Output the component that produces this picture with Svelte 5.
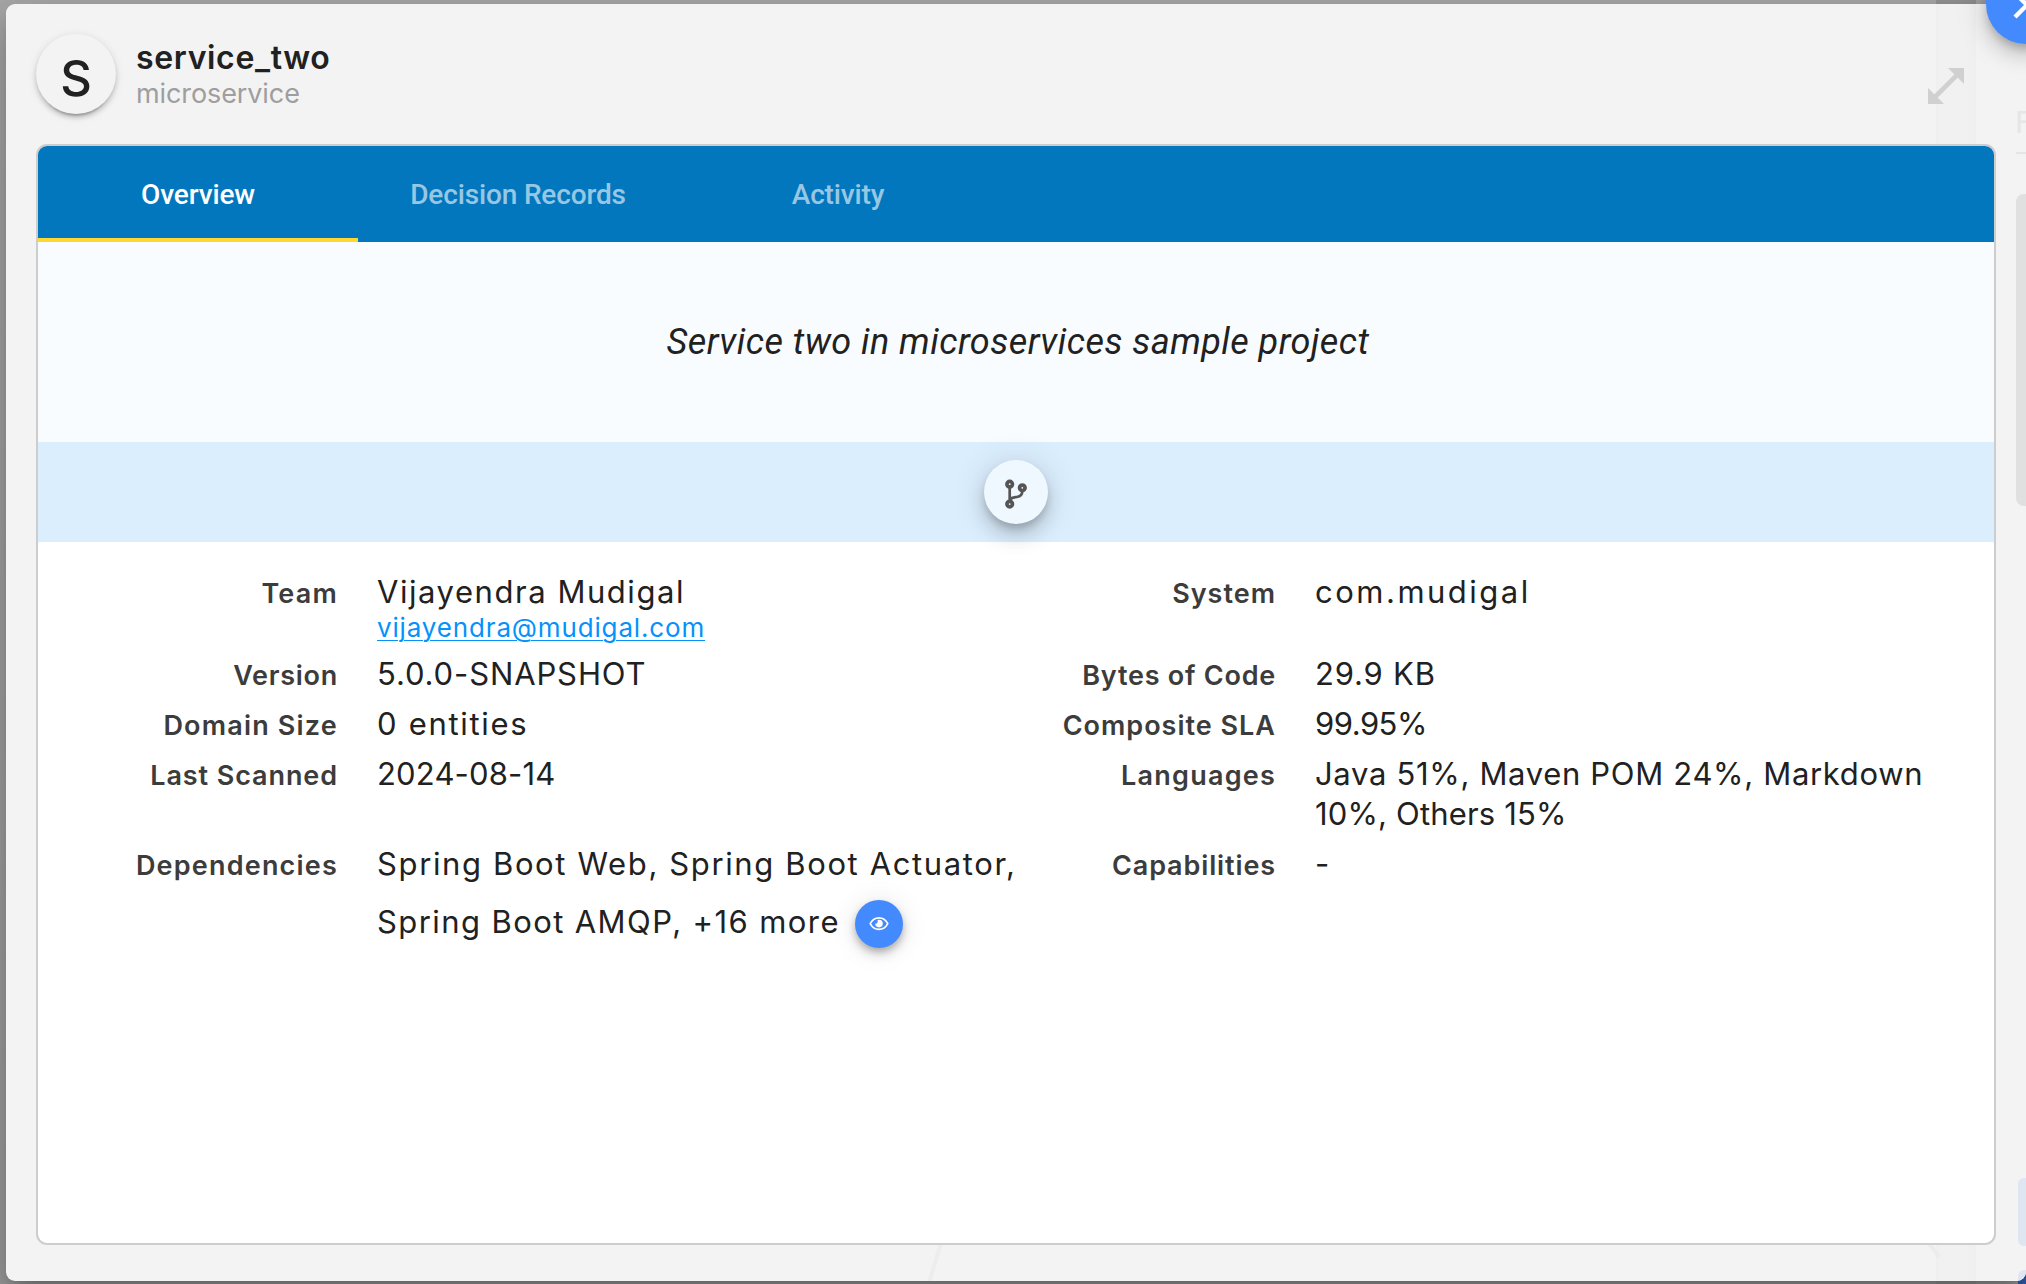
<script>
  const tabs = ['Overview', 'Decision Records', 'Activity'];
  const active = 'Overview';
</script>

{#snippet label(text, spacing)}
  <dt style:letter-spacing="{spacing}px">{text}</dt>
{/snippet}

{#snippet value(text, spacing)}
  <dd style:letter-spacing="{spacing}px">{text}</dd>
{/snippet}

<div class="screen">
  <div class="backdrop-lane"></div>
  <div class="backdrop-badge"></div>

  <main class="modal">
    <div class="ghosts" aria-hidden="true">
      <div class="lane"></div>
      <svg class="edge" viewBox="0 0 1040 40">
        <path d="M14 0 2 40" stroke="#ededed" stroke-width="4" />
        <path d="M1002 0 1012 14" stroke="#ececec" stroke-width="4" />
      </svg>
      <span class="ghost-text">F</span>
      <div class="rule"></div>
      <div class="card"></div>
      <div class="chip"></div>
      <div class="chip low"></div>
    </div>

    <header>
      <div class="avatar">S</div>
      <div class="names">
        <h1>service_two</h1>
        <p>microservice</p>
      </div>
      <svg class="expand" viewBox="0 0 36 36">
        <path d="M20 0H36V16ZM0 20V36H16Z" fill="#d0d0d0" />
        <path d="M7 29 29 7" stroke="#d0d0d0" stroke-width="4.6" />
      </svg>
    </header>

    <section class="panel">
      <nav>
        {#each tabs as tab}
          <button class="tab" class:active={tab === active}>{tab}</button>
        {/each}
      </nav>
      <div class="description">Service two in microservices sample project</div>
      <div class="links">
        <button class="repo" aria-label="Repository">
          <svg viewBox="0 0 64 64" fill="none" stroke="#555">
            <g stroke-width="3.7">
              <circle cx="25.7" cy="24.2" r="2.75" />
              <circle cx="25.7" cy="44.1" r="2.75" />
              <circle cx="38.3" cy="27.8" r="2.75" />
            </g>
            <path d="M25.7 27V41M38.3 31C38.3 35 36.5 36.4 33 37C29.5 37.5 27.5 37.4 26.2 39.5" stroke-width="2.7" />
          </svg>
        </button>
      </div>

      <dl>
        {@render label('Team', 1.2)}
        <dd style:letter-spacing="1.55px">Vijayendra Mudigal<a href="#mail">vijayendra@mudigal.com</a></dd>
        {@render label('System', 1)}
        {@render value('com.mudigal', 2.5)}

        {@render label('Version', 0.73)}
        {@render value('5.0.0-SNAPSHOT', 0.88)}
        {@render label('Bytes of Code', 0.76)}
        {@render value('29.9 KB', 0.8)}

        {@render label('Domain Size', 1.19)}
        {@render value('0 entities', 1.68)}
        {@render label('Composite SLA', 1)}
        {@render value('99.95%', -0.5)}

        {@render label('Last Scanned', 0.91)}
        {@render value('2024-08-14', 0.17)}
        {@render label('Languages', 1.22)}
        <dd>
          <span class="line languages">Java 51%, Maven POM 24%, Markdown</span>
          <span class="line others">10%, Others 15%</span>
        </dd>

        {@render label('Dependencies', 1.2)}
        <dd>
          <span class="line first">Spring Boot Web, Spring Boot Actuator,</span>
          <span class="more">
            <span>Spring Boot AMQP, +16 more</span>
            <button class="view" aria-label="View all">
              <svg viewBox="0 0 48 48" fill="none" stroke="#fff">
                <path d="M15.2 23.6C19.4 15.9 28.6 15.9 32.8 23.6C28.6 31.3 19.4 31.3 15.2 23.6Z" stroke-width="1.6" />
                <path d="M24 19.8A3.8 3.8 0 1 1 20.2 23.6C21.4 24 23.2 23.3 22.6 20.1Z" fill="#fff" stroke="none" />
              </svg>
            </button>
          </span>
        </dd>
        {@render label('Capabilities', 0.88)}
        {@render value('-', 0)}
      </dl>
    </section>
  </main>

  <button class="close" aria-label="Close">
    <svg viewBox="0 0 80 80"><path d="M29 29 53 53M53 29 29 53" stroke="#fff" stroke-width="4.4" /></svg>
  </button>
</div>

<style>
  :global(body) {
    overflow: hidden;
  }
  .screen {
    position: relative;
    box-sizing: border-box;
    width: 2026px;
    height: 1284px;
    padding: 4px 0 3px 6px;
    overflow: hidden;
    background: linear-gradient(#a8a8a8, #a4a4a4 30%, #9c9c9c);
    font-family: Inter, sans-serif;
    color: #212121;
  }
  .backdrop-lane {
    position: absolute;
    left: 1936px;
    top: 0;
    width: 40px;
    height: 1284px;
    background: #949494;
  }
  .backdrop-badge {
    position: absolute;
    left: 2018px;
    top: 1270px;
    width: 20px;
    height: 20px;
    background: #2f5daa;
  }
  .modal {
    position: relative;
    box-sizing: border-box;
    width: 2020px;
    height: 1277px;
    padding: 30px 30px 36px;
    border-radius: 9px;
    background: #f3f3f3;
    box-shadow: 0 11px 15px -7px rgba(0, 0, 0, 0.2), 0 24px 38px 3px rgba(0, 0, 0, 0.14), 0 9px 46px 8px rgba(0, 0, 0, 0.12);
  }
  .ghosts {
    position: absolute;
    inset: 0;
    overflow: hidden;
    border-radius: 9px;
  }
  .ghosts > * {
    position: absolute;
  }
  .lane {
    left: 1930px;
    top: 0;
    width: 40px;
    height: 1277px;
    background: linear-gradient(90deg, #efefef, #f1f1f1 12%, #f1f1f1 72%, #efefef);
  }
  .edge {
    left: 921px;
    top: 1239px;
    width: 1040px;
    height: 40px;
  }
  .ghost-text {
    left: 2009px;
    top: 98px;
    font: 32px/40px Roboto, sans-serif;
    color: #e6e6e6;
  }
  .rule {
    left: 2010px;
    top: 148px;
    width: 20px;
    height: 2px;
    background: #e5e5e5;
  }
  .card {
    left: 2010px;
    top: 190px;
    width: 30px;
    height: 312px;
    border-radius: 8px;
    background: #e0e0e0;
  }
  .chip {
    left: 2012px;
    top: 1174px;
    width: 30px;
    height: 68px;
    border-radius: 6px;
    background: #dfe6f2;
  }
  .chip.low {
    top: 1266px;
  }
  header {
    position: relative;
    display: flex;
    height: 110px;
  }
  .avatar {
    width: 80px;
    height: 80px;
    border-radius: 50%;
    background: #f3f3f3;
    box-shadow: 0 6px 2px -4px rgba(0, 0, 0, 0.2), 0 4px 4px rgba(0, 0, 0, 0.14), 0 2px 10px rgba(0, 0, 0, 0.12);
    font-size: 49px;
    font-weight: 500;
    line-height: 90px;
    text-align: center;
  }
  .names {
    flex: 1;
    padding: 6px 0 0 20px;
  }
  h1 {
    margin: 0;
    font-size: 32px;
    font-weight: 600;
    line-height: 35px;
    letter-spacing: 0.65px;
  }
  .names p {
    margin: 0;
    font-size: 27px;
    line-height: 38px;
    letter-spacing: -0.1px;
    color: #9e9e9e;
  }
  .expand {
    width: 36px;
    height: 36px;
    margin: 34px 32px 0 0;
  }
  button {
    padding: 0;
    border: 0;
    font: inherit;
  }
  .panel {
    position: relative;
    box-sizing: border-box;
    width: 1960px;
    height: 1101px;
    border: 2px solid #cdcdcd;
    border-radius: 11px;
    overflow: hidden;
    background: #fff;
  }
  nav {
    display: flex;
    height: 96px;
    background: #0277bd;
  }
  .tab {
    box-sizing: border-box;
    width: 320px;
    border-bottom: 4px solid transparent;
    border-top: 4px solid transparent;
    background: none;
    font: 500 28px Roboto, sans-serif;
    letter-spacing: -0.15px;
    color: rgba(255, 255, 255, 0.6);
  }
  .tab.active {
    border-bottom-color: #fdd835;
    color: #fff;
  }
  .description {
    height: 200px;
    padding-left: 4px;
    background: #f9fcff;
    font: italic 400 36px/200px Roboto, sans-serif;
    letter-spacing: 0.47px;
    text-align: center;
  }
  .links {
    display: flex;
    justify-content: center;
    align-items: center;
    height: 100px;
    background: #dbeefd;
  }
  .repo,
  .close {
    border-radius: 50%;
    box-shadow: 0 6px 10px -2px rgba(0, 0, 0, 0.2), 0 12px 20px rgba(0, 0, 0, 0.14), 0 2px 36px rgba(0, 0, 0, 0.12);
  }
  .repo {
    width: 64px;
    height: 64px;
    background: #eff7ff;
  }
  button svg {
    display: block;
    width: 100%;
    height: 100%;
  }
  dl {
    display: grid;
    grid-template-columns: 300px 639px 221px 1fr;
    gap: 10px 39px;
    margin: 0;
    padding-top: 30px;
  }
  dt {
    font-size: 27px;
    font-weight: 600;
    line-height: 43px;
    height: 40px;
    text-align: right;
    white-space: nowrap;
    color: #3c3c3c;
  }
  dd {
    margin: 0;
    font-size: 31px;
    line-height: 40px;
    white-space: nowrap;
  }
  a {
    display: block;
    width: max-content;
    font-size: 26px;
    line-height: 32px;
    letter-spacing: 0.85px;
    text-decoration-thickness: 1px;
    text-underline-offset: 3px;
    color: #0592fb;
  }
  .line {
    display: block;
  }
  .languages {
    letter-spacing: 0.68px;
  }
  .others {
    letter-spacing: 0.16px;
  }
  .first {
    letter-spacing: 1.63px;
  }
  .more {
    display: flex;
    gap: 15px;
    margin-top: 16px;
    line-height: 44px;
    letter-spacing: 1.41px;
  }
  .view {
    width: 48px;
    height: 48px;
    border-radius: 50%;
    background: #448aff;
    box-shadow: 0 4px 7px -1px rgba(0, 0, 0, 0.22), 0 6px 12px rgba(0, 0, 0, 0.14), 0 2px 28px rgba(0, 0, 0, 0.1);
  }
  .close {
    position: absolute;
    left: 1986px;
    top: -36px;
    width: 80px;
    height: 80px;
    background: #448aff;
  }
</style>
